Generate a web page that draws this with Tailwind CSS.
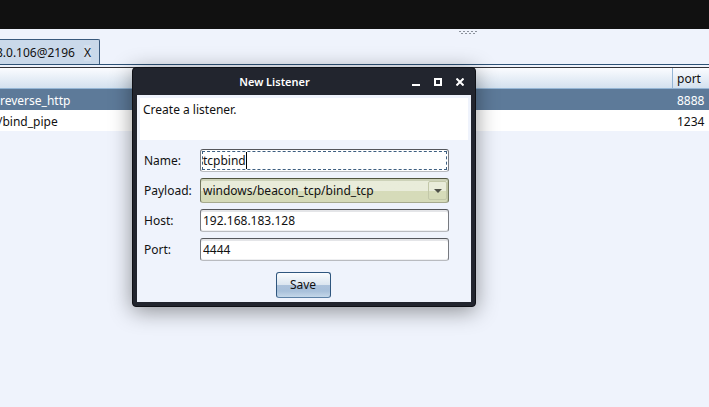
<!DOCTYPE html>
<html lang="en">
<head>
<meta charset="utf-8">
<title>New Listener</title>
<script src="https://cdn.jsdelivr.net/npm/@tailwindcss/browser@4"></script>
</head>
<body class="relative flex min-h-screen flex-col overflow-hidden bg-[#eff3fc] font-['Noto_Sans','Open_Sans',sans-serif] text-[12px] leading-[20px] text-[#111]">
  <header class="h-[29px] bg-[#111]"></header>

  <div class="flex h-[10px] justify-center pl-[227px] pt-[2px]">
    <svg class="h-[3px] w-[18px]" viewBox="0 0 18 3" fill="#8b919b" shape-rendering="crispEdges" aria-hidden="true">
      <path d="M0 0h2v1H0zM4 0h2v1H4zM8 0h2v1H8zM12 0h2v1h-2zM16 0h2v1h-2zM2 2h2v1H2zM6 2h2v1H6zM10 2h2v1h-2zM14 2h2v1h-2z"/>
    </svg>
  </div>

  <nav class="flex h-[26px] border-b border-[#2d5175]">
    <div class="flex w-[100px] items-center justify-end gap-[9px] overflow-hidden rounded-tr-[2px] border-t border-r border-[#39597c] bg-[#cad9ea] pt-px pr-[8px]">
      <span>192.168.0.106@2196</span>
      <button type="button" class="bg-[#d3dfed] leading-[16px]" aria-label="Close tab">X</button>
    </div>
  </nav>

  <main class="mt-[2px] border-t border-[#333338]">
    <table class="w-full table-fixed border-separate border-spacing-0 text-left leading-[18px]">
      <colgroup><col><col class="w-[36px]"></colgroup>
      <thead>
        <tr class="h-[21px] bg-linear-to-b from-[#fbfcff] to-[#d2e0ee]">
          <th class="border-r border-b border-[#95b6d5] p-0" aria-label="payload"></th>
          <th class="border-b border-[#95b6d5] p-0 pt-[2px] pl-[4px] font-normal">port</th>
        </tr>
      </thead>
      <tbody>
        <tr class="h-[21px] bg-[#5d7a99] text-white">
          <td class="p-0 pt-[2px]">reverse_http</td><td class="p-0 pt-[2px] pl-[4px]">8888</td>
        </tr>
        <tr class="h-[21px] bg-white">
          <td class="overflow-hidden p-0 pt-[2px]"><span class="-ml-[2px]">/bind_pipe</span></td><td class="p-0 pt-[2px] pl-[4px]">1234</td>
        </tr>
      </tbody>
    </table>
  </main>

  <section role="dialog" aria-labelledby="title" class="absolute top-[67px] left-[132px] w-[344px] rounded-[4px] border border-[#101116] bg-[#22252e] px-[4px] pb-[4px] shadow-[0_4px_22px_rgba(0,0,0,0.42)]">
    <div class="grid h-[27px] grid-cols-[1fr_auto] items-center pr-[7px]">
      <h1 id="title" class="text-center text-[11px] font-semibold text-white">New Listener</h1>
      <div class="flex gap-[14px]">
        <button type="button" aria-label="Minimize"><svg class="size-[8px]" viewBox="0 0 8 8" fill="#fff" shape-rendering="crispEdges"><path d="M0 6h8v2H0z"/></svg></button>
        <button type="button" aria-label="Maximize"><svg class="size-[8px]" viewBox="0 0 8 8" fill="none" stroke="#fff" stroke-width="2" shape-rendering="crispEdges"><path d="M1 1h6v6H1z"/></svg></button>
        <button type="button" aria-label="Close"><svg class="size-[8px]" viewBox="0 0 8 8" fill="none" stroke="#fff" stroke-width="2"><path d="M.5 .5l7 7M7.500 .5l-7 7"/></svg></button>
      </div>
    </div>

    <div class="bg-[#eff3fc] p-[3px] pb-[4px]">
      <p class="h-[42px] bg-white px-[3px] pt-[2px]">Create a listener.</p>
      <form class="pt-[9px]">
        <div class="grid grid-cols-[56px_1fr] items-center gap-y-[6px] pr-[19px] pl-[4px]">
          <label for="name">Name:</label>
          <div class="relative flex h-[23px] rounded-[3px] border border-[#777a80] border-t-[#55575c] border-b-[#b9bbc0] bg-white p-px">
            <input id="name" value="tcpbind" class="w-full min-w-0 border border-dashed border-[#3e5f80] outline-none">
            <span aria-hidden="true" class="pointer-events-none absolute inset-y-[2px] left-[2px] flex"><span class="invisible">tcpbind</span><span class="w-px bg-black"></span></span>
          </div>
          <label for="payload">Payload:</label>
          <div class="relative">
            <select id="payload" class="block h-[25px] w-full appearance-none rounded-[3px] border border-[#72775f] border-t-[#50543f] border-b-[#a6aa8e] bg-linear-to-b from-[#e9ecda] from-50% to-[#d6dbb9] to-50% pl-[2px] leading-[20px] shadow-[inset_0_2px_0_#cdd2b9,inset_-1px_0_0_#c0c5a5] outline-none">
              <option>windows/beacon_tcp/bind_tcp</option>
            </select>
            <span aria-hidden="true" class="pointer-events-none absolute top-[3px] right-[2px] flex h-[19px] w-[19px] items-center justify-center rounded-[2px] border border-[#c3c8a9]">
              <svg class="h-[4px] w-[8px]" viewBox="0 0 8 4" fill="#4e5048"><path d="M0 0h8L4 4z"/></svg>
            </span>
          </div>
          <label for="host">Host:</label>
          <input id="host" value="192.168.183.128" class="h-[23px] w-full min-w-0 rounded-[3px] border border-[#777a80] border-t-[#55575c] border-b-[#b9bbc0] bg-white px-[2px] shadow-[inset_0_2px_0_#e4e5e8,inset_0_-1px_0_#eeeff1] outline-none">
          <label for="port">Port:</label>
          <input id="port" value="4444" class="h-[23px] w-full min-w-0 rounded-[3px] border border-[#777a80] border-t-[#55575c] border-b-[#b9bbc0] bg-white px-[2px] shadow-[inset_0_2px_0_#e4e5e8,inset_0_-1px_0_#eeeff1] outline-none">
        </div>
        <div class="mt-[11px] flex justify-center pr-[2px]">
          <button type="button" class="h-[26px] w-[55px] rounded-[3px] border border-[#2f567e] border-b-[#5c80a5] bg-[linear-gradient(#fafcfe,#dbe5ef_50%,#adc2db_50%,#a8c0da_75%,#c4d7e9)]">Save</button>
        </div>
      </form>
    </div>
  </section>
</body>
</html>
